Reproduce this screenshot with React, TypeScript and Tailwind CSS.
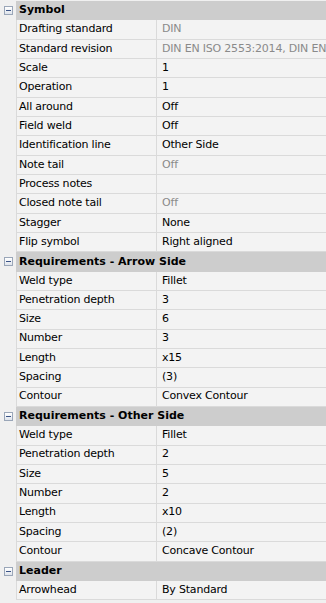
import React from "react";

type Row = { name: string; value: string; dim?: boolean };
type Section = { title: string; rows: Row[] };

const sections: Section[] = [
  {
    title: "Symbol",
    rows: [
      { name: "Drafting standard", value: "DIN", dim: true },
      { name: "Standard revision", value: "DIN EN ISO 2553:2014, DIN EN ISO 2553:2014", dim: true },
      { name: "Scale", value: "1" },
      { name: "Operation", value: "1" },
      { name: "All around", value: "Off" },
      { name: "Field weld", value: "Off" },
      { name: "Identification line", value: "Other Side" },
      { name: "Note tail", value: "Off", dim: true },
      { name: "Process notes", value: "" },
      { name: "Closed note tail", value: "Off", dim: true },
      { name: "Stagger", value: "None" },
      { name: "Flip symbol", value: "Right aligned" },
    ],
  },
  {
    title: "Requirements - Arrow Side",
    rows: [
      { name: "Weld type", value: "Fillet" },
      { name: "Penetration depth", value: "3" },
      { name: "Size", value: "6" },
      { name: "Number", value: "3" },
      { name: "Length", value: "x15" },
      { name: "Spacing", value: "(3)" },
      { name: "Contour", value: "Convex Contour" },
    ],
  },
  {
    title: "Requirements - Other Side",
    rows: [
      { name: "Weld type", value: "Fillet" },
      { name: "Penetration depth", value: "2" },
      { name: "Size", value: "5" },
      { name: "Number", value: "2" },
      { name: "Length", value: "x10" },
      { name: "Spacing", value: "(2)" },
      { name: "Contour", value: "Concave Contour" },
    ],
  },
  {
    title: "Leader",
    rows: [{ name: "Arrowhead", value: "By Standard" }],
  },
];

const MinusBox = () => (
  <div className="flex items-center justify-center w-[9px] h-[9px] border border-[#9aa6b8] bg-gradient-to-b from-white to-[#dfe4ec]">
    <div className="w-[5px] h-px bg-[#3b5486]" />
  </div>
);

export default function App() {
  return (
    <div
      className="w-[326px] h-[603px] overflow-hidden bg-[#f0f0f0] pt-px text-[11px] tracking-[-0.2px] text-black"
      style={{ fontFamily: '"DejaVu Sans", sans-serif' }}
    >
      {sections.map((s) => (
        <div key={s.title}>
          <div className="flex h-[19.33px]">
            <div className="flex w-4 shrink-0 items-center justify-center">
              <MinusBox />
            </div>
            <div className="flex flex-1 items-center bg-[#cdcdcd] pl-[3px] font-bold tracking-normal whitespace-nowrap">
              {s.title}
            </div>
          </div>
          {s.rows.map((r) => (
            <div key={s.title + r.name} className="flex h-[19.33px]">
              <div className="w-4 shrink-0" />
              <div className="flex w-[141px] shrink-0 items-center border-b border-l border-r border-[#dadada] bg-[#f3f3f3] pl-[2px] whitespace-nowrap">
                {r.name}
              </div>
              <div
                className={`flex flex-1 items-center overflow-hidden border-b border-[#dadada] bg-[#f3f3f3] pl-[5px] whitespace-nowrap ${
                  r.dim ? "text-[#8a8a8a]" : "text-black"
                }`}
              >
                {r.value}
              </div>
            </div>
          ))}
        </div>
      ))}
    </div>
  );
}
